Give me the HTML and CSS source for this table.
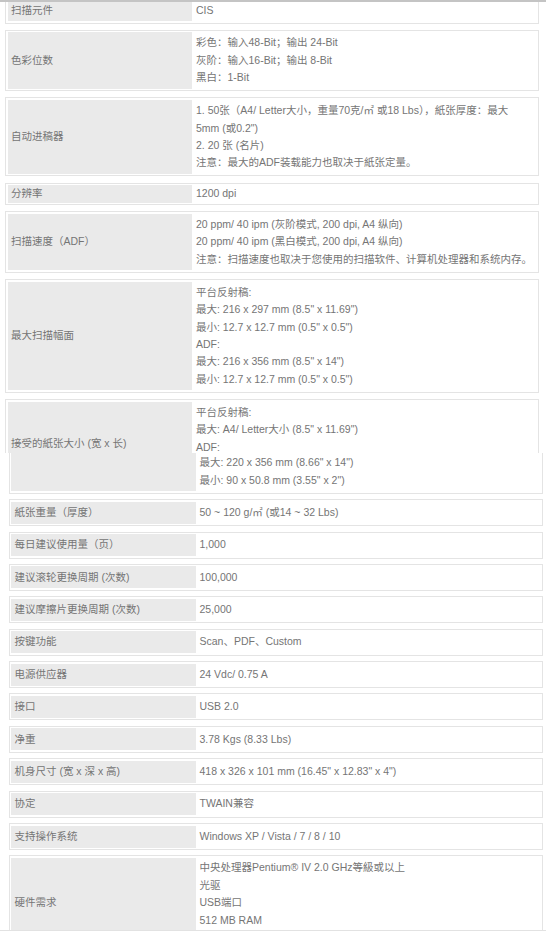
FILE: index.html
```html
<!DOCTYPE html>
<html lang="zh-CN">
<head>
<meta charset="utf-8">
<title>规格</title>
<link rel="stylesheet" href="styles.css">
</head>
<body>
<div class="page">
  <div class="sec upper">
    <div class="clip-top">
      <div class="row">
        <div class="lbl">扫描元件</div>
        <div class="val first">CIS</div>
      </div>
    </div>
    <div class="row">
      <div class="lbl">色彩位数</div>
      <div class="val">彩色：输入48-Bit；输出 24-Bit<br>灰阶：输入16-Bit；输出 8-Bit<br>黑白：1-Bit</div>
    </div>
    <div class="row">
      <div class="lbl">自动进稿器</div>
      <div class="val">1. 50张（A4/ Letter大小，重量70克/㎡ 或18 Lbs），紙张厚度：最大<br>5mm (或0.2")<br>2. 20 张 (名片)<br>注意：最大的ADF装载能力也取决于紙张定量。</div>
    </div>
    <div class="row">
      <div class="lbl">分辨率</div>
      <div class="val tight">1200 dpi</div>
    </div>
    <div class="row">
      <div class="lbl">扫描速度（ADF）</div>
      <div class="val">20 ppm/ 40 ipm (灰阶模式, 200 dpi, A4 纵向)<br>20 ppm/ 40 ipm (黑白模式, 200 dpi, A4 纵向)<br>注意：扫描速度也取决于您使用的扫描软件、计算机处理器和系统内存。</div>
    </div>
    <div class="row">
      <div class="lbl">最大扫描幅面</div>
      <div class="val">平台反射稿:<br>最大: 216 x 297 mm (8.5" x 11.69")<br>最小: 12.7 x 12.7 mm (0.5" x 0.5")<br>ADF:<br>最大: 216 x 356 mm (8.5" x 14")<br>最小: 12.7 x 12.7 mm (0.5" x 0.5")</div>
    </div>
    <div class="row cut">
      <div class="lbl lbl-split">接受的紙张大小 (宽 x 长)</div>
      <div class="val">平台反射稿:<br>最大: A4/ Letter大小 (8.5" x 11.69")<br>ADF:</div>
    </div>
  </div>
  <div class="sec lower">
    <div class="row cont">
      <div class="lbl"></div>
      <div class="val cont-val">最大: 220 x 356 mm (8.66" x 14")<br>最小: 90 x 50.8 mm (3.55" x 2")</div>
    </div>
    <div class="row">
      <div class="lbl">紙张重量（厚度）</div>
      <div class="val">50 ~ 120 g/㎡ (或14 ~ 32 Lbs)</div>
    </div>
    <div class="row">
      <div class="lbl">每日建议使用量（页）</div>
      <div class="val">1,000</div>
    </div>
    <div class="row">
      <div class="lbl">建议滚轮更换周期 (次数)</div>
      <div class="val">100,000</div>
    </div>
    <div class="row">
      <div class="lbl">建议摩擦片更换周期 (次数)</div>
      <div class="val">25,000</div>
    </div>
    <div class="row">
      <div class="lbl">按键功能</div>
      <div class="val">Scan、PDF、Custom</div>
    </div>
    <div class="row">
      <div class="lbl">电源供应器</div>
      <div class="val">24 Vdc/ 0.75 A</div>
    </div>
    <div class="row">
      <div class="lbl">接口</div>
      <div class="val">USB 2.0</div>
    </div>
    <div class="row">
      <div class="lbl">净重</div>
      <div class="val">3.78 Kgs (8.33 Lbs)</div>
    </div>
    <div class="row">
      <div class="lbl">机身尺寸 (宽 x 深 x 高)</div>
      <div class="val">418 x 326 x 101 mm (16.45" x 12.83" x 4")</div>
    </div>
    <div class="row">
      <div class="lbl">协定</div>
      <div class="val">TWAIN兼容</div>
    </div>
    <div class="row">
      <div class="lbl">支持操作系统</div>
      <div class="val">Windows XP / Vista / 7 / 8 / 10</div>
    </div>
    <div class="row">
      <div class="lbl">硬件需求</div>
      <div class="val multi">中央处理器Pentium® IV 2.0 GHz等級或以上<br>光驱<br>USB端口<br>512 MB RAM<br>&nbsp;</div>
    </div>
  </div>
</div>
</body>
</html>
```

FILE: styles.css
```css
html, body {
  margin: 0;
  padding: 0;
  background: #ffffff;
}

body {
  font-family: "Liberation Sans", Arial, "Noto Sans CJK SC", sans-serif;
  font-size: 10.5px;
  color: #757575;
}

.page {
  width: 546px;
  height: 931px;
  overflow: hidden;
  box-sizing: border-box;
  border-top: 2px solid #c4c4c4;
  border-bottom: 1px solid #e2e2e2;
}

.sec {
  display: flex;
  flex-direction: column;
  width: 534px;
}

.upper {
  margin-left: 5px;
  gap: 6.2px;
}

.lower {
  margin-left: 8.5px;
  gap: 5.4px;
}

.row {
  flex: none;
  display: flex;
  box-sizing: border-box;
  border: 1px solid #e4e4e4;
  padding: 1.5px;
  background: #ffffff;
}

.lbl {
  flex: none;
  width: 184.5px;
  box-sizing: border-box;
  display: flex;
  align-items: center;
  padding-left: 3.5px;
  background: #eaeaea;
  line-height: 17.4px;
  white-space: nowrap;
}

.val {
  flex: 1;
  padding: 2.3px 4px;
  line-height: 17.4px;
  white-space: nowrap;
}

.upper .val {
  padding: 2.2px 4px;
}

.upper .val.tight {
  padding: 0 4px;
}

.upper .val.first {
  padding: 1.5px 4px;
}

.clip-top {
  flex: none;
  height: 21.5px;
  overflow: hidden;
  display: flex;
  flex-direction: column;
  justify-content: flex-end;
}

.row.cut {
  height: 53.9px;
  overflow: hidden;
  border-bottom: none;
  padding-bottom: 0;
  align-items: stretch;
}

.lbl-split {
  align-items: flex-start;
  padding-top: 33.8px;
}

.row.cont {
  border-top: none;
  padding-top: 0;
}

.lower .val.cont-val {
  padding: 1.3px 4px 2.2px;
}

.lower .val.multi {
  padding: 1.5px 4px;
}
```
